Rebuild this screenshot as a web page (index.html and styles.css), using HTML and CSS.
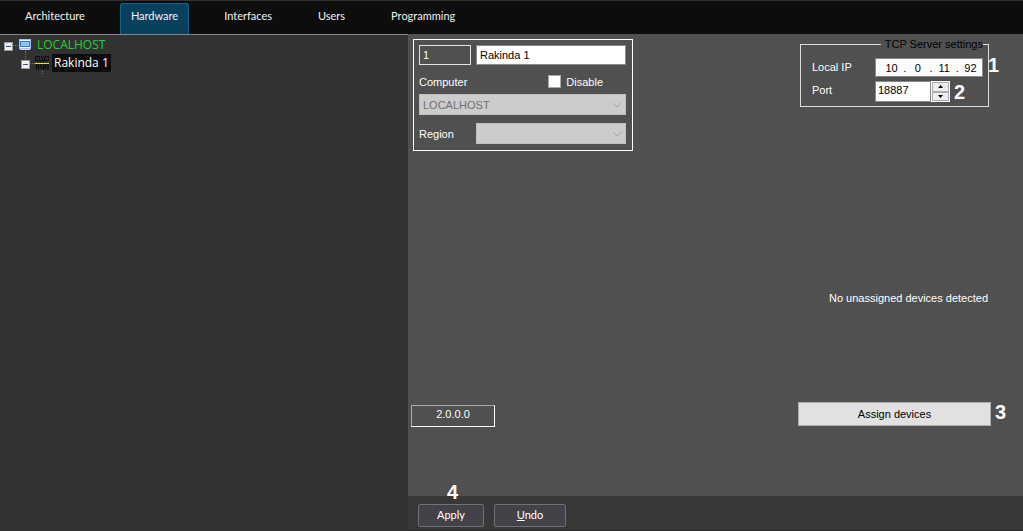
FILE: index.html
```html
<!DOCTYPE html>
<html lang="en">
<head>
<meta charset="utf-8">
<meta name="viewport" content="width=device-width, initial-scale=1">
<title>Hardware</title>
<link rel="stylesheet" href="styles.css">
</head>
<body class="app">
<nav class="tabs">
  <a class="tab" href="#architecture">Architecture</a>
  <a class="tab tab-active" href="#hardware">Hardware</a>
  <a class="tab" href="#interfaces">Interfaces</a>
  <a class="tab" href="#users">Users</a>
  <a class="tab" href="#programming">Programming</a>
</nav>
<div class="workspace">
  <aside class="sidebar">
    <ul class="tree">
      <li>
        <div class="node">
          <button class="toggle" type="button" aria-label="Collapse LOCALHOST"></button>
          <span class="branch"></span>
          <svg class="icon-pc" width="14" height="12" viewBox="0 0 14 12" aria-hidden="true">
            <rect x="1.500" y="0.500" width="11" height="9" fill="#f2f8fe" stroke="#a9c4e4"/>
            <rect x="2.500" y="2.500" width="9" height="5" fill="#8cc4f6" stroke="#2f7bd0"/>
            <path d="M2 10.500h10" stroke="#d5dfec"/>
          </svg>
          <span class="node-label node-online">LOCALHOST</span>
        </div>
        <ul class="subtree">
          <li class="node node-child">
            <button class="toggle" type="button" aria-label="Collapse Rakinda 1"></button>
            <span class="branch"></span>
            <svg class="icon-scan" width="14" height="14" viewBox="0 0 14 14" aria-hidden="true">
              <path d="M0.500 0.500h4v4h-4zM9.500 0.500h4v4h-4zM2 2.500h1M11 2.500h1M6.500 0v2M7.500 2v3M5.500 4v2M8.500 0v1M8.500 4v2" fill="none" stroke="#0b0b0b"/>
              <path d="M1.500 8v5M3.500 8v6M6 8v5M8.500 8v6M10.500 8v5M13 8v6" fill="none" stroke="#0b0b0b" stroke-width="1.400"/>
              <path d="M0 7.500h14" fill="none" stroke="#e6df3a"/>
            </svg>
            <span class="node-label node-selected">Rakinda 1</span>
          </li>
        </ul>
      </li>
    </ul>
  </aside>
  <main class="main">
    <div class="content">
      <div class="column column-left">
        <form class="object">
          <div class="row">
            <input class="field field-id" type="text" value="1" aria-label="Identifier" readonly>
            <input class="field field-name" type="text" value="Rakinda 1" aria-label="Name">
          </div>
          <div class="row row-computer">
            <label for="computer">Computer</label>
            <label class="check"><input class="box" type="checkbox">Disable</label>
          </div>
          <div class="picker">
            <select class="select" id="computer" disabled><option>LOCALHOST</option></select>
            <svg class="chevron" width="10" height="6" viewBox="0 0 10 6" aria-hidden="true"><path d="M1 1l4 4 4-4"/></svg>
          </div>
          <div class="row row-region">
            <label class="region-label" for="region">Region</label>
            <div class="picker">
              <select class="select" id="region" disabled><option></option></select>
              <svg class="chevron" width="10" height="6" viewBox="0 0 10 6" aria-hidden="true"><path d="M1 1l4 4 4-4"/></svg>
            </div>
          </div>
        </form>
        <div class="version">2.0.0.0</div>
      </div>
      <div class="column column-right">
        <fieldset class="server">
          <legend class="legend">TCP Server settings</legend>
          <div class="setting">
            <label class="setting-label" for="ip1">Local IP</label>
            <div class="ip">
              <input class="octet" id="ip1" type="text" value="10"><span>.</span>
              <input class="octet" type="text" value="0" aria-label="Second octet"><span>.</span>
              <input class="octet" type="text" value="11" aria-label="Third octet"><span>.</span>
              <input class="octet" type="text" value="92" aria-label="Fourth octet">
            </div>
            <span class="mark mark-ip">1</span>
          </div>
          <div class="setting">
            <label class="setting-label" for="port">Port</label>
            <input class="port" id="port" type="text" inputmode="numeric" value="18887">
            <div class="spinner">
              <button class="spin" type="button" aria-label="Increase"><svg width="5" height="3" viewBox="0 0 5 3"><path d="M0 3L2.500 0 5 3z"/></svg></button>
              <button class="spin" type="button" aria-label="Decrease"><svg width="5" height="3" viewBox="0 0 5 3"><path d="M0 0L2.500 3 5 0z"/></svg></button>
            </div>
            <span class="mark mark-port">2</span>
          </div>
        </fieldset>
        <div class="devices">
          <p class="status">No unassigned devices detected</p>
          <div class="anchor">
            <button class="assign" type="button">Assign devices</button>
            <span class="mark mark-assign">3</span>
          </div>
        </div>
      </div>
    </div>
    <footer class="actions">
      <div class="anchor">
        <button class="action action-apply" type="button">Apply</button>
        <span class="mark mark-apply">4</span>
      </div>
      <button class="action" type="button"><u>U</u>ndo</button>
    </footer>
  </main>
</div>
</body>
</html>
```
FILE: styles.css
```css
* {
  box-sizing: border-box;
}

.app {
  margin: 0;
  min-height: 100vh;
  display: flex;
  flex-direction: column;
  background: #323232;
  color: #fff;
  font: 11px/14px "Liberation Sans", Arial, sans-serif;
}

button,
input,
select {
  margin: 0;
  font: inherit;
}

.tabs {
  display: flex;
  gap: 24px;
  height: 34px;
  padding: 2px 14px 0;
  border-top: 1px solid #303133;
  background: #0d0d0e;
}

.tab {
  padding: 4px 10px 0;
  border: 1px solid transparent;
  border-bottom: 0;
  border-radius: 3px 3px 0 0;
  color: #f2f2f2;
  font: 11px/16px Lato, sans-serif;
  text-decoration: none;
}

.tab-active {
  background: #07415d;
  border-color: #17648a;
}

.workspace {
  flex: 1;
  display: grid;
  grid-template-columns: 408px 1fr;
}

.sidebar {
  padding: 1px 4px;
  border-top: 1px solid #85858a;
  background: #323232;
}

.tree,
.subtree {
  margin: 0;
  padding: 0;
  list-style: none;
}

.subtree {
  padding-left: 17px;
}

.node {
  display: flex;
  align-items: center;
  height: 18px;
}

.node-child {
  position: relative;
}

.node-child::before,
.node-child::after {
  content: "";
  position: absolute;
  border-left: 1px dotted #777;
}

.node-child::before {
  left: 4px;
  top: -3px;
  height: 8px;
}

.node-child::after {
  left: 21px;
  top: 17px;
  height: 3px;
}

.toggle {
  position: relative;
  width: 9px;
  height: 9px;
  margin-top: 3px;
  padding: 0;
  border: 1px solid #98999b;
  background: #f0f0f0;
}

.toggle::after {
  content: "";
  position: absolute;
  left: 1px;
  right: 1px;
  top: 3px;
  height: 1px;
  background: #33539c;
}

.branch {
  width: 5px;
  border-top: 1px dotted #777;
}

.icon-scan {
  margin-right: -1px;
}

.node-label {
  padding: 0 3px 0 5px;
  font: 12px/18px "Open Sans", sans-serif;
}

.node-online {
  color: #19d62a;
}

.node-selected {
  margin-left: 4px;
  padding: 0 2px;
  background: #0d0d0d;
}

.main {
  display: flex;
  flex-direction: column;
  background: #505050;
}

.content {
  flex: 1;
  display: flex;
  justify-content: space-between;
  padding: 5px 32px 69px 3px;
}

.column {
  display: flex;
  flex-direction: column;
  justify-content: space-between;
}

.column-left {
  width: 222px;
}

.column-right {
  width: 193px;
}

.object {
  margin-left: 2px;
  padding: 5px 6px 6px 5px;
  border: 1px solid #fff;
}

.row {
  display: flex;
  align-items: center;
  gap: 5px;
}

.field {
  height: 20px;
  min-width: 0;
  padding: 0 3px;
  border: 1px solid #8a8a8a;
}

.field-id {
  width: 52px;
  background: #505050;
  border-color: #e4e4e4;
  color: #fff;
}

.field-name {
  flex: 1;
  background: #fff;
  color: #000;
}

.row-computer {
  height: 29px;
  padding: 4px 23px 0 0;
  justify-content: space-between;
}

.check {
  display: flex;
  align-items: center;
  gap: 5px;
}

.box {
  appearance: none;
  width: 13px;
  height: 13px;
  border: 1px solid #aaa;
  background: #fff;
}

.box:checked {
  background: #17648a;
}

.picker {
  position: relative;
  flex: 1;
}

.select {
  appearance: none;
  display: block;
  width: 100%;
  height: 21px;
  padding: 0 20px 0 3px;
  border: 1px solid #c0c0c0;
  border-radius: 0;
  background: #ccc;
  color: #707070;
  opacity: 1;
}

.chevron {
  position: absolute;
  right: 4px;
  top: 8px;
  fill: none;
  stroke: #a5a5a5;
}

.row-region {
  margin-top: 8px;
}

.region-label {
  width: 52px;
}

.version {
  width: 84px;
  height: 22px;
  border: 1px solid #fff;
  border-color: #aaa #fff #fff #aaa;
  line-height: 16px;
  text-align: center;
}

.server {
  min-width: 0;
  margin: 0 2px;
  padding: 8px 5px 4px 11px;
  border: 1px solid #dcdcdc;
}

.legend {
  margin-left: auto;
  padding: 0 0 0 4px;
  color: #000;
  line-height: 11px;
}

.setting {
  position: relative;
  display: flex;
  align-items: flex-start;
}

.setting + .setting {
  margin-top: 4px;
}

.setting-label {
  width: 63px;
  line-height: 18px;
}

.ip {
  flex: 1;
  display: flex;
  align-items: center;
  height: 19px;
  padding: 0 0 0 4px;
  border: 1px solid #8a8a8a;
  background: #fff;
  color: #000;
}

.octet {
  flex: 1;
  width: 0;
  padding: 0;
  border: 0;
  background: transparent;
  color: #000;
  text-align: center;
}

.port {
  width: 56px;
  height: 21px;
  padding: 0 2px 3px;
  border: 1px solid #8a8a8a;
  background: #fff;
  color: #000;
}

.spinner {
  display: grid;
  width: 19px;
  height: 21px;
  padding: 1px;
  background: #fff;
}

.spin {
  display: grid;
  place-items: center;
  padding: 0;
  border: 1px solid #adadad;
  background: #eee;
}

.anchor {
  position: relative;
}

.mark {
  position: absolute;
  font: bold 20px/22px "Liberation Sans", Arial, sans-serif;
}

.mark-ip {
  left: 176px;
  top: -4px;
}

.mark-port {
  left: 142px;
  top: 0;
}

.mark-assign {
  left: 197px;
  top: -1px;
}

.mark-apply {
  left: 29px;
  bottom: 27px;
}

.devices {
  padding-bottom: 1px;
}

.status {
  margin: 0 0 97px;
  padding-right: 3px;
  text-align: right;
}

.assign {
  display: block;
  width: 100%;
  height: 24px;
  padding: 0;
  border: 1px solid #adadad;
  background: #e1e1e1;
  color: #000;
}

.actions {
  display: flex;
  gap: 10px;
  height: 35px;
  padding: 8px 10px 0;
  border-bottom: 1px solid #2e2c2d;
  background: #3a3738;
}

.action {
  width: 72px;
  height: 23px;
  padding: 0 0 2px;
  border: 1px solid #707078;
  border-radius: 2px;
  background: #434249;
  color: #fff;
  font: 11px/16px Lato, sans-serif;
}

.action-apply {
  width: 66px;
}
```
